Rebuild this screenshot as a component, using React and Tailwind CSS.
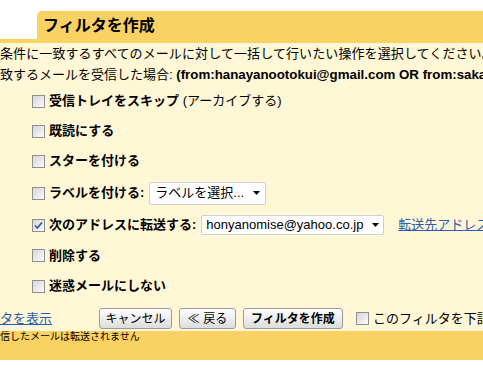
import React from 'react';

const font = { fontFamily: '"Liberation Sans", "Noto Sans CJK JP", sans-serif' };

// Classic Windows-style checkbox
function Box({ checked }) {
    return (
        <span className="relative inline-block w-[13px] h-[13px] shrink-0 border border-[#8f8f8f] bg-gradient-to-br from-[#d6d6d6] to-[#fbfbfb]">
            {checked && (
                <svg viewBox="0 0 11 11" className="absolute inset-0 w-[11px] h-[11px]">
                    <path d="M2 5.5 L4.3 8 L9 2.5" fill="none" stroke="#3c5a9a" strokeWidth="1.8" />
                </svg>
            )}
        </span>
    );
}

function Caret() {
    return (
        <svg viewBox="0 0 7 4" className="w-[7px] h-[4px] shrink-0">
            <path d="M0 0 H7 L3.5 4 Z" fill="#000" />
        </svg>
    );
}

function Row({ h, children }) {
    return <div className={`flex items-center pl-[32px] gap-[4px] ${h} [&>*]:shrink-0`}>{children}</div>;
}

function Btn({ w, bold, children }) {
    return (
        <button className={`shrink-0 h-[21px] ${w} border border-[#9a9a9a] rounded-[3px] bg-gradient-to-b from-[#ffffff] to-[#dcdcdc] text-[12px] leading-none text-black ${bold ? 'font-bold' : ''}`}>
            {children}
        </button>
    );
}

export default function App() {
    return (
        <div className="w-[483px] h-[371px] overflow-hidden bg-white text-black text-[13px]" style={font}>
            <div className="h-[11px]" />
            <div className="flex pl-[37px]">
                <div className="flex-1 h-[28px] bg-[#fad163] rounded-tl-[5px] pl-[6px] text-[16px] font-bold leading-[30px] whitespace-nowrap">
                    フィルタを作成
                </div>
            </div>
            <div className="h-[4px] bg-[#fad163]" />

            <div className="bg-[#fff7d6] h-[293px] whitespace-nowrap">
                <div className="h-[21px] flex items-center tracking-[0.1px]">条件に一致するすべてのメールに対して一括して行いたい操作を選択してください。</div>
                <div className="h-[22px] flex items-center">
                    致するメールを受信した場合:&nbsp;<b className="text-[13.3px]">(from:hanayanootokui@gmail.com OR from:sakaya@example.com)</b>
                </div>

                <Row h="h-[30px]"><Box /><span><b>受信トレイをスキップ</b> (アーカイブする)</span></Row>
                <Row h="h-[30px]"><Box /><b>既読にする</b></Row>
                <Row h="h-[30px]"><Box /><b>スターを付ける</b></Row>
                <Row h="h-[34px]">
                    <Box /><b>ラベルを付ける:</b>
                    <div className="ml-[1px] w-[117px] h-[23px] bg-white border border-[#cfcfcf] rounded-[2px] flex items-center justify-between pl-[5px] pr-[5px]">
                        <span>ラベルを選択...</span><Caret />
                    </div>
                </Row>
                <Row h="h-[30px]">
                    <Box checked /><b>次のアドレスに転送する:</b>
                    <div className="ml-[1px] w-[183px] h-[20px] bg-white border border-[#cfcfcf] rounded-[2px] flex items-center justify-between pl-[4px] pr-[4px]">
                        <span>honyanomise@yahoo.co.jp</span><Caret />
                    </div>
                    <a className="ml-[10px] text-[#2a5db0] underline">転送先アドレスを追加</a>
                </Row>
                <Row h="h-[31px]"><Box /><b>削除する</b></Row>
                <Row h="h-[30px]"><Box /><b>迷惑メールにしない</b></Row>

                <div className="h-[35px] flex items-center">
                    <div className="w-[99px] shrink-0">
                        <a className="text-[#2a5db0] underline">タを表示</a>
                    </div>
                    <div className="flex gap-[7px] shrink-0">
                        <Btn w="w-[73px]">キャンセル</Btn>
                        <Btn w="w-[57px]">≪ 戻る</Btn>
                        <Btn w="w-[100px]" bold>フィルタを作成</Btn>
                    </div>
                    <div className="ml-[13px] flex items-center gap-[4px] shrink-0">
                        <Box /><span>このフィルタを下記の会話にも適用する</span>
                    </div>
                </div>
            </div>

            <div className="bg-[#fad163] h-[29px]">
                <div className="-mt-[5px] text-[10px] leading-[12px] whitespace-nowrap">信したメールは転送されません</div>
            </div>
        </div>
    );
}
